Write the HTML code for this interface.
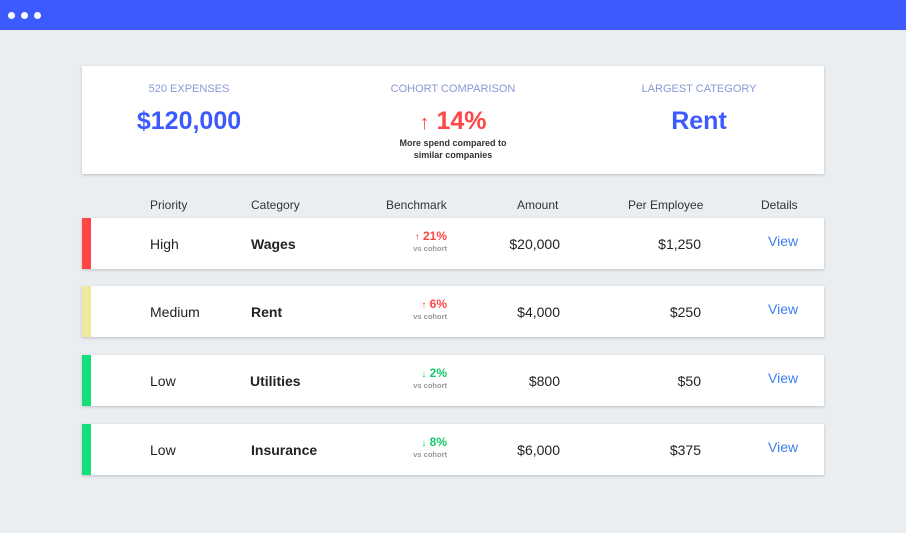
<!DOCTYPE html><html><head><style>
body{margin:0;width:906px;height:533px;background:#ebeef1;font-family:"Liberation Sans",Arial,sans-serif;position:relative;overflow:hidden}
.top{position:absolute;left:0;top:0;width:906px;height:30px;background:#3d5afe}
.dot{position:absolute;top:12px;width:7px;height:7px;border-radius:50%;background:#fff}
.card{position:absolute;left:82px;top:66px;width:742px;height:108px;background:#fff;box-shadow:0 1px 3px rgba(0,0,0,.2)}
.lab{position:absolute;top:17px;font-size:11px;color:#8c97d6;white-space:nowrap;transform:translateX(-50%)}
.big{position:absolute;top:41px;font-size:25px;font-weight:bold;color:#3d5afe;white-space:nowrap;transform:translateX(-50%)}
.hd{position:absolute;top:198px;font-size:12px;color:#333}
.row{position:absolute;left:82px;width:742px;height:51px;background:#fff;box-shadow:0 1px 3px rgba(0,0,0,.2)}
.bar{position:absolute;left:0;top:0;width:9px;height:51px}
.c{position:absolute;top:18px;font-size:14px;color:#222;white-space:nowrap}
.r{text-align:right}
.bm{position:absolute;right:377px;top:12px;text-align:right;font-size:12px;font-weight:bold;line-height:12px}
.bm i{font-style:normal;font-size:10px}
.bm small{display:block;font-size:7.5px;color:#999;font-weight:bold;line-height:9px}
.v{position:absolute;left:686px;top:15px;font-size:14px;color:#3d7ff0}
</style></head><body>
<div class="top"><div class="dot" style="left:8px"></div><div class="dot" style="left:21px"></div><div class="dot" style="left:34px"></div></div>
<div class="card">
<div class="lab" style="left:107px">520 EXPENSES</div>
<div class="big" style="left:107px">$120,000</div>
<div class="lab" style="left:371px">COHORT COMPARISON</div>
<div class="big" style="left:371px;color:#ff4545"><span style="font-weight:normal;font-size:20px">↑</span> 14%</div>
<div style="position:absolute;left:371px;top:71px;transform:translateX(-50%);font-size:9px;font-weight:bold;color:#333;text-align:center;line-height:12px;white-space:nowrap">More spend compared to<br>similar companies</div>
<div class="lab" style="left:617px">LARGEST CATEGORY</div>
<div class="big" style="left:617px">Rent</div>
</div>
<div class="hd" style="left:150px">Priority</div>
<div class="hd" style="left:251px">Category</div>
<div class="hd" style="left:386px">Benchmark</div>
<div class="hd" style="left:517px">Amount</div>
<div class="hd" style="left:628px">Per Employee</div>
<div class="hd" style="left:761px">Details</div>

<div class="row" style="top:218px"><div class="bar" style="background:#ff4545"></div>
<div class="c" style="left:68px">High</div><div class="c" style="left:169px;font-weight:bold">Wages</div>
<div class="bm" style="color:#ff4545"><i>↑</i> 21%<small>vs cohort</small></div>
<div class="c r" style="right:264px">$20,000</div><div class="c r" style="right:123px">$1,250</div><div class="v">View</div></div>

<div class="row" style="top:286px"><div class="bar" style="background:#efea9c"></div>
<div class="c" style="left:68px">Medium</div><div class="c" style="left:169px;font-weight:bold">Rent</div>
<div class="bm" style="color:#ff4545"><i>↑</i> 6%<small>vs cohort</small></div>
<div class="c r" style="right:264px">$4,000</div><div class="c r" style="right:123px">$250</div><div class="v">View</div></div>

<div class="row" style="top:355px"><div class="bar" style="background:#14e07a"></div>
<div class="c" style="left:68px">Low</div><div class="c" style="left:168px;font-weight:bold">Utilities</div>
<div class="bm" style="color:#14c96a"><i>↓</i> 2%<small>vs cohort</small></div>
<div class="c r" style="right:264px">$800</div><div class="c r" style="right:123px">$50</div><div class="v">View</div></div>

<div class="row" style="top:424px"><div class="bar" style="background:#14e07a"></div>
<div class="c" style="left:68px">Low</div><div class="c" style="left:169px;font-weight:bold">Insurance</div>
<div class="bm" style="color:#14c96a"><i>↓</i> 8%<small>vs cohort</small></div>
<div class="c r" style="right:264px">$6,000</div><div class="c r" style="right:123px">$375</div><div class="v">View</div></div>
</body></html>
